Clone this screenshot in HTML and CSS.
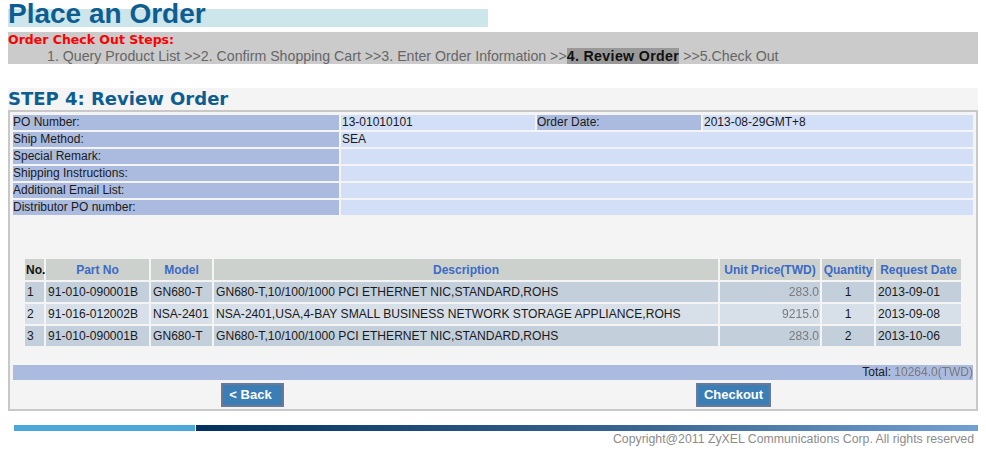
FILE: index.html
```html
<!doctype html>
<html>
  <head>
    <meta charset="utf8">
    <title>Place an Order</title>
    <link rel="stylesheet" href="styles.css">
  </head>
  <body>
    <h1 class="page-title">Place an Order</h1>

    <div class="steps">
      <div class="steps-title">Order Check Out Steps:</div>
      <div class="steps-list">1. Query Product List &gt;&gt;2. Confirm Shopping Cart &gt;&gt;3. Enter Order Information &gt;&gt;<b class="current">4. Review Order</b> &gt;&gt;5.Check Out</div>
    </div>

    <div class="panel">
      <h2 class="step-title">STEP 4: Review Order</h2>
      <div class="box">
        <table class="info">
          <colgroup>
            <col class="c-label"><col class="c-value"><col class="c-label2"><col>
          </colgroup>
          <tr>
            <td class="lbl">PO Number:</td>
            <td class="val">13-01010101</td>
            <td class="lbl">Order Date:</td>
            <td class="val">2013-08-29GMT+8</td>
          </tr>
          <tr><td class="lbl">Ship Method:</td><td class="val" colspan="3">SEA</td></tr>
          <tr><td class="lbl">Special Remark:</td><td class="val" colspan="3"></td></tr>
          <tr><td class="lbl">Shipping Instructions:</td><td class="val" colspan="3"></td></tr>
          <tr><td class="lbl">Additional Email List:</td><td class="val" colspan="3"></td></tr>
          <tr><td class="lbl">Distributor PO number:</td><td class="val" colspan="3"></td></tr>
        </table>

        <div class="items-wrap">
          <table class="items">
            <colgroup>
              <col style="width:19px"><col style="width:103px"><col style="width:61px"><col>
              <col style="width:100px"><col style="width:52px"><col style="width:85px">
            </colgroup>
            <thead>
              <tr>
                <th class="no">No.</th>
                <th>Part No</th>
                <th>Model</th>
                <th>Description</th>
                <th>Unit Price(TWD)</th>
                <th>Quantity</th>
                <th>Request Date</th>
              </tr>
            </thead>
            <tbody>
              <tr class="odd">
                <td>1</td><td>91-010-090001B</td><td>GN680-T</td>
                <td>GN680-T,10/100/1000 PCI ETHERNET NIC,STANDARD,ROHS</td>
                <td class="price"><span class="masked">283.0</span></td>
                <td class="qty">1</td><td>2013-09-01</td>
              </tr>
              <tr class="even">
                <td>2</td><td>91-016-012002B</td><td>NSA-2401</td>
                <td>NSA-2401,USA,4-BAY SMALL BUSINESS NETWORK STORAGE APPLIANCE,ROHS</td>
                <td class="price"><span class="masked">9215.0</span></td>
                <td class="qty">1</td><td>2013-09-08</td>
              </tr>
              <tr class="odd">
                <td>3</td><td>91-010-090001B</td><td>GN680-T</td>
                <td>GN680-T,10/100/1000 PCI ETHERNET NIC,STANDARD,ROHS</td>
                <td class="price"><span class="masked">283.0</span></td>
                <td class="qty">2</td><td>2013-10-06</td>
              </tr>
            </tbody>
          </table>
        </div>

        <div class="total">Total: <span class="masked">10264.0(TWD)</span></div>
        <div class="actions">
          <div><button class="btn btn-back">&lt; Back</button></div>
          <div><button class="btn">Checkout</button></div>
        </div>
      </div>
    </div>

    <footer>
      <div class="bar"><span class="bar-light"></span><span class="bar-dark"></span></div>
      <div class="copyright">Copyright@2011 ZyXEL Communications Corp. All rights reserved</div>
    </footer>
  </body>
</html>
```
FILE: styles.css
```css
html, body { background: #ffffff; }
body { margin: 0 8px; font-family: "Liberation Sans", Arial, sans-serif; font-size: 12px; color: #1a1a1a; }

.page-title { margin: 0; width: 480px; line-height: 28px; font-size: 28px; font-weight: bold; color: #0d5d91; background: linear-gradient(to bottom, transparent 9px, #cde6ec 9px, #cde6ec 27px, transparent 27px); white-space: nowrap; }

.steps { margin-top: 4px; width: 970px; background: #cbcbcb; }
.steps-title { height: 16px; line-height: 16px; font-family: "DejaVu Sans", Verdana, sans-serif; font-size: 12.5px; font-weight: bold; color: #ff0000; }
.steps-list { height: 16px; line-height: 16px; padding-left: 39px; font-size: 14.2px; color: #666666; white-space: nowrap; }
.steps-list .current { background: #999999; color: #111111; letter-spacing: 0.35px; }

.panel { margin-top: 24px; width: 970px; background: #f4f4f4; }
.step-title { margin: 0; height: 22px; line-height: 22px; font-family: "DejaVu Sans", Verdana, sans-serif; font-size: 18px; font-weight: bold; color: #0d5d91; }
.box { border: 2px solid #c8c8c8; padding: 1px; }

.info { width: 100%; table-layout: fixed; border-spacing: 2px; }
.info .c-label { width: 326px; }
.info .c-value { width: 194px; }
.info .c-label2 { width: 164px; }
.info td { height: 15px; padding: 0; line-height: 15px; white-space: nowrap; overflow: hidden; }
.info td.lbl { background: #aabbdf; }
.info td.val { background: #d3dff6; padding-left: 1px; }

.items-wrap { padding: 40px 12px 17px; }
.items { width: 100%; table-layout: fixed; border-spacing: 2px; }
.items th { height: 21px; padding: 0; background: #cdd1cd; color: #3b6ac6; font-weight: bold; text-align: center; white-space: nowrap; }
.items th.no { color: #111111; text-align: left; padding-left: 1px; }
.items td { height: 20px; padding: 0 0 0 2px; white-space: nowrap; overflow: hidden; font-size: 12.1px; }
.items tr.odd td { background: #c4cfdc; }
.items tr.even td { background: #d7dfe8; }
.items td.price { text-align: right; padding: 0 1px 0 0; }
.items td.qty { text-align: center; padding: 0; }

.masked { display: inline-block; color: #7a7a7a; filter: blur(0.7px); }

.total { margin: 0 2px; height: 15px; line-height: 15px; background: #aabbdf; text-align: right; }
.actions { display: grid; grid-template-columns: 1fr 1fr; gap: 2px; margin: 0 2px; padding: 3px 0 1px; }
.actions div { text-align: center; }
.btn { height: 24px; margin: 0; padding: 0 6px; border: 2px solid #6b7896; background: #3b7db5; color: #ffffff; font-family: "Liberation Sans", Arial, sans-serif; font-size: 13px; font-weight: bold; line-height: 20px; vertical-align: top; }
.btn-back { padding-right: 10px; }

footer { width: 970px; }
.bar { display: flex; height: 6px; margin: 14px 0 0 6px; }
.bar-light { width: 181px; background: #4aa7d9; }
.bar-dark { flex: 1; margin-left: 1px; background: linear-gradient(to right, #02325c, #3d6a95 60%, #70a1d1); }
.copyright { margin-top: 1px; padding-right: 4px; line-height: 15px; font-size: 12.3px; text-align: right; color: #8c8c8c; }
```
